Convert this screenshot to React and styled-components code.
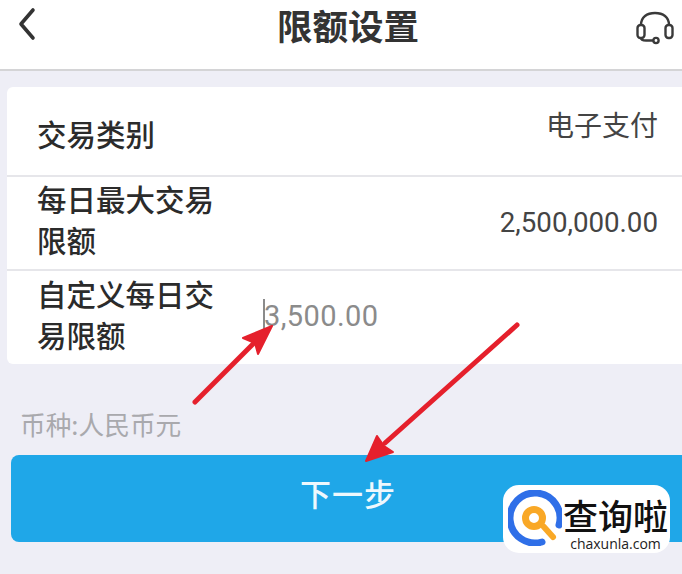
import styled, { createGlobalStyle } from "styled-components"

const GlobalStyle = createGlobalStyle`
  html, body {
    margin: 0;
    padding: 0;
    background: #eeeef6;
  }
`

const Page = styled.div`
  position: relative;
  width: 682px;
  height: 574px;
  overflow: hidden;
  background: #eeeef6;
  font-family: "Noto Sans CJK SC", "Roboto", sans-serif;
  color: #2b2b2b;
`

const Header = styled.header`
  height: 69px;
  background: #fff;
  border-bottom: 2px solid #d4d4d6;
  display: flex;
  align-items: center;
  justify-content: space-between;
  padding: 0 8px 0 16px;
`

const IconButton = styled.div`
  display: flex;
  width: ${(p) => p.$w}px;
  margin-top: ${(p) => p.$top}px;
`

const Title = styled.h1`
  margin: -20px 0 0 22px;
  font-size: 35.5px;
  font-weight: 700;
  color: #333;
`

const Card = styled.section`
  margin: 16px 0 0 7px;
  background: #fff;
  border-radius: 6px 0 0 6px;
`

const Row = styled.div`
  height: ${(p) => p.$h}px;
  display: flex;
  align-items: center;
  padding: 0 24px 0 30px;
  border-top: ${(p) => (p.$first ? "none" : "2px solid #e6e6ea")};
`

const Label = styled.div`
  width: 183px;
  margin-top: ${(p) => p.$top || 0}px;
  font-size: 29.5px;
  line-height: 41px;
  font-weight: 500;
  color: #2b2b2b;
`

const Value = styled.div`
  margin-left: auto;
  margin-top: ${(p) => p.$top || 0}px;
  font-size: ${(p) => p.$size}px;
  font-family: "Roboto", "Noto Sans CJK SC", sans-serif;
  color: #444;
`

const AmountInput = styled.div`
  margin: -3px 0 0 43px;
  font-family: "Roboto", sans-serif;
  font-size: 29px;
  letter-spacing: 0.4px;
  color: #8b8b8b;
  border-left: 2px solid #8b8b8b;
  line-height: 34px;
  text-indent: -1px;
`

const Currency = styled.div`
  margin: 44px 0 0 20px;
  font-size: 25.7px;
  line-height: 32px;
  color: #a9a9ad;
`

const NextButton = styled.button`
  display: block;
  margin: 15px 0 0 11px;
  width: 671px;
  height: 87px;
  border: none;
  border-radius: 8px 0 0 8px;
  background: #1fa7e8;
  color: #eef8fd;
  font-family: "Noto Sans CJK SC", sans-serif;
  font-size: 31px;
  font-weight: 500;
  letter-spacing: 1px;
  padding: 0 0 12px 16px;
  text-align: left;
  text-indent: 273px;
`

const ArrowLayer = styled.svg`
  position: absolute;
  left: 0;
  top: 0;
  pointer-events: none;
`

const Watermark = styled.div`
  position: absolute;
  left: 503px;
  top: 485px;
  width: 167px;
  height: 68px;
  background: #fff;
  border-radius: 16px;
  display: flex;
  align-items: center;
  padding-left: 5px;
  box-sizing: border-box;
`

const LogoMark = styled.svg`
  flex: none;
  margin-top: -2px;
`

const WatermarkText = styled.div`
  margin: 11px 0 0 1px;
  display: flex;
  flex-direction: column;
  align-items: center;
  gap: 3px;
`

const WatermarkName = styled.div`
  font-size: 35px;
  line-height: 36px;
  font-weight: 500;
  white-space: nowrap;
  color: #111;
`

const WatermarkUrl = styled.div`
  font-family: "Open Sans", sans-serif;
  font-size: 14px;
  line-height: 16px;
  color: #222;
`

const App = () => {
  return (
    <Page>
      <GlobalStyle />
      <Header>
        <IconButton $w={22} $top={-22}>
          <svg width="22" height="34" viewBox="0 0 22 34" fill="none">
            <path d="M17 3 5 17l12 14" stroke="#333" strokeWidth="3.6" strokeLinecap="round" strokeLinejoin="round" />
          </svg>
        </IconButton>
        <Title>限额设置</Title>
        <IconButton $w={38} $top={-13}>
          <svg width="38" height="34" viewBox="0 0 38 34" fill="none" stroke="#3a3a3a" strokeWidth="2.4">
            <path d="M5 14C5 6 11 2 19 2s14 4 14 12" />
            <rect x="1.5" y="14" width="7" height="13" rx="3" />
            <rect x="29.5" y="14" width="7" height="13" rx="3" />
            <path d="M5 27c0 2 2 2.5 5 2.5h7.5" />
            <circle cx="20" cy="29.5" r="2.6" />
          </svg>
        </IconButton>
      </Header>

      <Card>
        <Row $first $h={88}>
          <Label $top={5}>交易类别</Label>
          <Value $top={-14} $size={28}>电子支付</Value>
        </Row>
        <Row $h={92}>
          <Label $top={-8}>每日最大交易限额</Label>
          <Value $top={-2} $size={27.7}>2,500,000.00</Value>
        </Row>
        <Row $h={93}>
          <Label $top={-7}>自定义每日交易限额</Label>
          <AmountInput>3,500.00</AmountInput>
        </Row>
      </Card>

      <Currency>币种:人民币元</Currency>
      <NextButton>下一步</NextButton>

      <ArrowLayer width="682" height="574" viewBox="0 0 682 574">
        <path d="M195 402 257 340" stroke="#e5202c" strokeWidth="5" strokeLinecap="round" />
        <path d="M272 326 243 338 255 343 258 354Z" fill="#e5202c" stroke="#e5202c" strokeWidth="2" strokeLinejoin="round" />
        <path d="M517 325 385 443" stroke="#e5202c" strokeWidth="5" strokeLinecap="round" />
        <path d="M366 461 377 436 384 446 393 452Z" fill="#e5202c" stroke="#e5202c" strokeWidth="2" strokeLinejoin="round" />
      </ArrowLayer>

      <Watermark>
        <LogoMark width="54" height="56" viewBox="0 0 54 56" fill="none">
          <path d="M51 35A25 25 0 1 0 34 52" stroke="#2f6fe8" strokeWidth="7" strokeLinecap="round" />
          <circle cx="26" cy="28" r="8.5" stroke="#f9a826" strokeWidth="7" />
          <path d="M36 37 45 47" stroke="#f9a826" strokeWidth="6" strokeLinecap="round" />
        </LogoMark>
        <WatermarkText>
          <WatermarkName>查询啦</WatermarkName>
          <WatermarkUrl>chaxunla.com</WatermarkUrl>
        </WatermarkText>
      </Watermark>
    </Page>
  )
}

export default App
